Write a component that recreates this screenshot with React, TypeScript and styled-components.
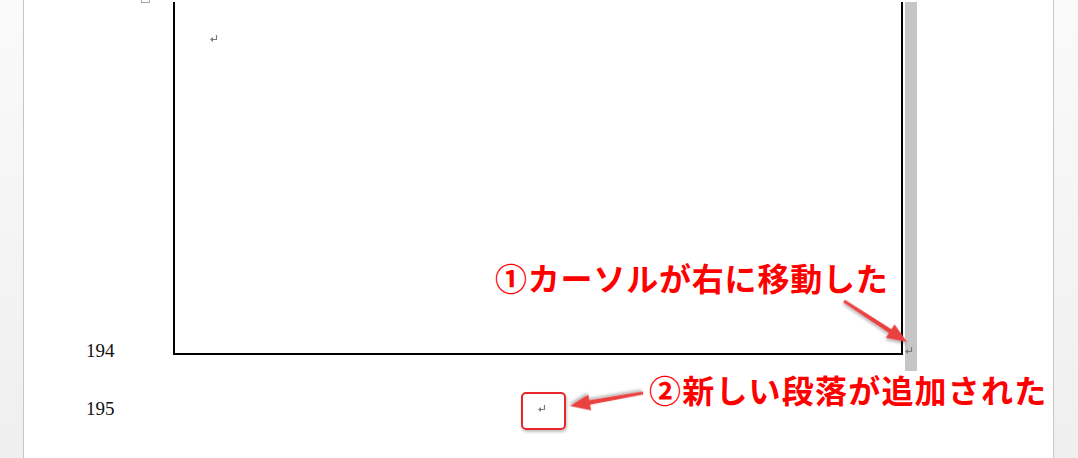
import React from 'react'
import styled, { createGlobalStyle } from 'styled-components'

const GlobalStyle = createGlobalStyle`
  html, body {
    margin: 0;
    padding: 0;
  }
  body {
    width: 1078px;
    height: 458px;
    overflow: hidden;
    font-family: 'Liberation Serif', 'Noto Sans CJK JP', serif;
  }
`

const Screen = styled.div`
  position: relative;
  display: flex;
  width: 1078px;
  height: 458px;
  background: linear-gradient(#fafafa, #efefef);
  overflow: hidden;
`

const Gutter = styled.div<{ $width: number }>`
  width: ${p => p.$width}px;
  flex: none;
`

const Page = styled.div`
  position: relative;
  width: 1031px;
  flex: none;
  background: #fff;
  border-left: 1px solid #c6c6c6;
  border-right: 1px solid #c6c6c6;
  padding-top: 2px;
  box-sizing: border-box;
`

const CropMark = styled.div`
  position: absolute;
  left: 117px;
  top: -6px;
  width: 7px;
  height: 7px;
  border: 1px solid #a8a8a8;
`

const TableLine = styled.div`
  display: flex;
  height: 369px;
`

const NumberCol = styled.div<{ $bottom?: number; $top?: number }>`
  width: 149px;
  flex: none;
  box-sizing: border-box;
  padding-left: 62px;
  display: flex;
  align-items: ${p => (p.$top !== undefined ? 'flex-start' : 'flex-end')};
  padding-bottom: ${p => p.$bottom ?? 0}px;
  padding-top: ${p => p.$top ?? 0}px;
`

const LineNumber = styled.span`
  font-family: 'Liberation Serif', serif;
  font-size: 19px;
  line-height: 19px;
  color: #111;
`

const Table = styled.div`
  width: 730px;
  height: 353px;
  flex: none;
  box-sizing: border-box;
  border-left: 2px solid #000;
  border-right: 2px solid #000;
  border-bottom: 2px solid #000;
  padding: 33px 0 0 35px;
`

const MarkSvg = styled.svg`
  display: block;
`

const ReturnMark: React.FC = () => (
  <MarkSvg width={8} height={7} viewBox="0 0 8 7">
    <path d="M6.5 0 V4.5 H2" stroke="#7c7c7c" strokeWidth={1.2} fill="none" />
    <path d="M0 4.5 L3 2 L3 7 Z" fill="#7c7c7c" />
  </MarkSvg>
)

const EndBar = styled.div`
  width: 12px;
  height: 369px;
  margin-left: 2px;
  flex: none;
  background: #c6c6c6;
  box-sizing: border-box;
  padding: 345px 0 0 0;
`

const ParagraphLine = styled.div`
  display: flex;
  height: 60px;
`

const ParagraphText = styled.div`
  padding: 34px 0 0 365px;
`

const Callout = styled.div<{ $left: number; $top: number; $spacing: number }>`
  position: absolute;
  left: ${p => p.$left}px;
  top: ${p => p.$top}px;
  font-family: 'Noto Sans CJK JP', sans-serif;
  font-weight: 700;
  font-size: 32px;
  line-height: 40px;
  letter-spacing: ${p => p.$spacing}px;
  color: #ff0000;
  white-space: nowrap;
`

const HighlightBox = styled.div`
  position: absolute;
  left: 521px;
  top: 392px;
  width: 45px;
  height: 38px;
  box-sizing: border-box;
  border: 2px solid #e8262a;
  border-radius: 5px;
  box-shadow: 1px 2px 3px rgba(0, 0, 0, 0.25);
`

const ArrowLayer = styled.svg`
  position: absolute;
  left: 0;
  top: 0;
  pointer-events: none;
`

const Arrow: React.FC<{ x1: number; y1: number; x2: number; y2: number }> = ({ x1, y1, x2, y2 }) => {
  const angle = Math.atan2(y2 - y1, x2 - x1)
  const len = Math.hypot(x2 - x1, y2 - y1)
  const head = 20
  const half = 8
  const deg = (angle * 180) / Math.PI
  return (
    <g transform={`translate(${x1} ${y1}) rotate(${deg})`} filter="url(#shadow)">
      <path
        d={`M0 -1.6 L${len - head} -2.2 L${len - head} -${half} L${len} 0 L${len - head} ${half} L${len - head} 2.2 L0 1.6 Z`}
        fill="#e94040"
      />
    </g>
  )
}

export default function App() {
  return (
    <>
      <GlobalStyle />
      <Screen>
        <Gutter $width={23} />
        <Page>
          <CropMark />
          <TableLine>
            <NumberCol $bottom={11}>
              <LineNumber>194</LineNumber>
            </NumberCol>
            <Table>
              <ReturnMark />
            </Table>
            <EndBar>
              <ReturnMark />
            </EndBar>
          </TableLine>
          <ParagraphLine>
            <NumberCol $top={28}>
              <LineNumber>195</LineNumber>
            </NumberCol>
            <ParagraphText>
              <ReturnMark />
            </ParagraphText>
          </ParagraphLine>
        </Page>
        <Gutter $width={24} />

        <Callout $left={495} $top={257} $spacing={0.8}>①カーソルが右に移動した</Callout>
        <Callout $left={649} $top={369} $spacing={1.2}>②新しい段落が追加された</Callout>
        <HighlightBox />
        <ArrowLayer width={1078} height={458} viewBox="0 0 1078 458">
          <defs>
            <filter id="shadow" x="-20%" y="-50%" width="140%" height="200%">
              <feDropShadow dx="1" dy="2" stdDeviation="1.5" floodColor="#000" floodOpacity="0.3" />
            </filter>
          </defs>
          <Arrow x1={844} y1={301} x2={907} y2={342} />
          <Arrow x1={643} y1={393} x2={570} y2={406} />
        </ArrowLayer>
      </Screen>
    </>
  )
}
